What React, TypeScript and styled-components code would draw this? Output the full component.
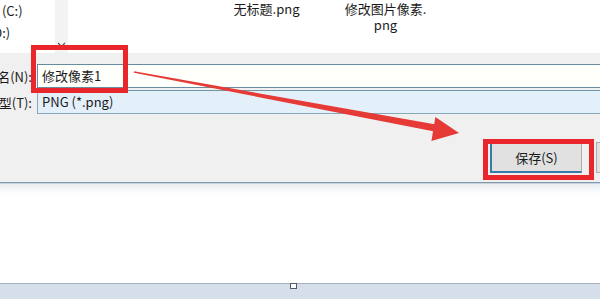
import { createGlobalStyle } from "styled-components";
import styled from "styled-components";

const GlobalStyle = createGlobalStyle`
	html, body {
		margin: 0;
		padding: 0;
		overflow: hidden;
		background: #ffffff;
	}
	body {
		font-family: "Noto Sans CJK SC", "Noto Sans", sans-serif;
		color: #1b1b1b;
	}
`;

const navItems = ["本地磁盘 (C:)", "新加卷 (D:)"];

const App = () => {
	return (
		<Window>
			<GlobalStyle />
			<Browser>
				<NavPane>
					<NavList>
						{navItems.map((item) => (
							<NavItem key={item}>{item}</NavItem>
						))}
					</NavList>
				</NavPane>
				<ScrollTrack>
					<svg width="9" height="6" viewBox="0 0 9 6">
						<polyline points="1,1 4.5,4.5 8,1" fill="none" stroke="#555" strokeWidth="1.2" />
					</svg>
				</ScrollTrack>
				<FileGrid>
					<FileItem>
						<FileLine>无标题.png</FileLine>
					</FileItem>
					<FileItem>
						<FileLine>修改图片像素.</FileLine>
						<FileLine>png</FileLine>
					</FileItem>
				</FileGrid>
			</Browser>

			<Form>
				<FieldRow>
					<Label>
						<span>文件名(N):</span>
					</Label>
					<NameInput>修改像素1</NameInput>
				</FieldRow>
				<FieldRow $gap={2}>
					<Label>
						<span>保存类型(T):</span>
					</Label>
					<TypeSelect>PNG (*.png)</TypeSelect>
				</FieldRow>
				<ButtonRow>
					<Button $primary>保存(S)</Button>
					<Button />
				</ButtonRow>
			</Form>

			<Divider />
			<WhiteArea />
			<StatusBar>
				<Grip />
			</StatusBar>

			<Marks viewBox="0 0 600 299" width="600" height="299">
				<rect x="33.5" y="47.5" width="92" height="43" fill="none" stroke="#e8262b" strokeWidth="5" />
				<rect x="485.5" y="141.5" width="106" height="36" fill="none" stroke="#e8262b" strokeWidth="5" />
				<polygon points="134,71.3 436,124.5 434.5,131.5 134,72.7" fill="#e53a36" />
				<polygon points="459,133 435.4,117 431.4,141" fill="#e53a36" />
			</Marks>
		</Window>
	);
};

const Window = styled.div`
	position: relative;
	width: 600px;
	height: 299px;
	overflow: hidden;
	display: flex;
	flex-direction: column;
	font-size: 13px;
`;

const Browser = styled.div`
	height: 53px;
	display: flex;
	background: #ffffff;
`;

const NavPane = styled.div`
	width: 55px;
	overflow: hidden;
`;

const NavList = styled.div`
	margin-left: -53px;
	display: flex;
	flex-direction: column;
`;

const NavItem = styled.div`
	height: 22px;
	line-height: 22px;
	white-space: nowrap;
	color: #1b1b1b;
`;

const ScrollTrack = styled.div`
	width: 13px;
	background: #f3f3f3;
	display: flex;
	flex-direction: column;
	justify-content: flex-end;
	align-items: center;
	padding-bottom: 5px;
	box-sizing: border-box;
`;

const FileGrid = styled.div`
	flex: 1;
	display: flex;
	padding: 1px 0 0 139px;
`;

const FileItem = styled.div`
	width: 119px;
	display: flex;
	flex-direction: column;
	align-items: center;
`;

const FileLine = styled.div`
	height: 16px;
	line-height: 16px;
	white-space: nowrap;
	color: #1b1b1b;
`;

const Form = styled.div`
	height: 129px;
	box-sizing: border-box;
	background: #f0f0f0;
	padding-top: 11px;
	display: flex;
	flex-direction: column;
`;

const FieldRow = styled.div<{ $gap?: number }>`
	display: flex;
	align-items: center;
	height: 24px;
	margin-top: ${(p) => p.$gap ?? 0}px;
`;

const Label = styled.div`
	flex: none;
	width: 37px;
	padding-right: 5px;
	box-sizing: border-box;
	display: flex;
	justify-content: flex-end;
	overflow: hidden;
	white-space: nowrap;
	color: #1b1b1b;

	span {
		flex: none;
	}
`;

const NameInput = styled.div`
	flex: 1;
	height: 24px;
	margin-right: -4px;
	box-sizing: border-box;
	border: 1px solid #6a8aa0;
	background: #fffffc;
	padding-left: 4px;
	line-height: 22px;
`;

const TypeSelect = styled.div`
	flex: 1;
	height: 24px;
	margin-right: -4px;
	box-sizing: border-box;
	border: 1px solid #84aabb;
	border-top-color: #6f97a8;
	background: #e3f0fa;
	padding-left: 4px;
	line-height: 22px;
`;

const ButtonRow = styled.div`
	display: flex;
	gap: 14px;
	margin-top: 28px;
	padding-left: 490px;
`;

const Button = styled.div<{ $primary?: boolean }>`
	flex: none;
	width: 92px;
	height: 31px;
	box-sizing: border-box;
	background: #e1e1e1;
	border: 1px solid #adadad;
	border-left: ${(p) => (p.$primary ? "2px solid #3a78a6" : "1px solid #adadad")};
	border-bottom: ${(p) => (p.$primary ? "2px solid #3a78a6" : "1px solid #adadad")};
	display: flex;
	align-items: center;
	justify-content: center;
	color: #1b1b1b;
`;

const Divider = styled.div`
	height: 2px;
	background: linear-gradient(#8398ab 50%, #c5d3df 50%);
`;

const WhiteArea = styled.div`
	height: 99px;
	background: linear-gradient(#e9edf1, #ffffff 10px);
`;

const StatusBar = styled.div`
	flex: 1;
	border-top: 1px solid #a8b0bc;
	background: #d6dee9;
	padding-left: 290px;
`;

const Grip = styled.div`
	width: 5px;
	height: 4px;
	margin-top: -1px;
	border: 1px solid #555b66;
	background: #ffffff;
`;

const Marks = styled.svg`
	position: absolute;
	left: 0;
	top: 0;
	pointer-events: none;
`;

export default App;
